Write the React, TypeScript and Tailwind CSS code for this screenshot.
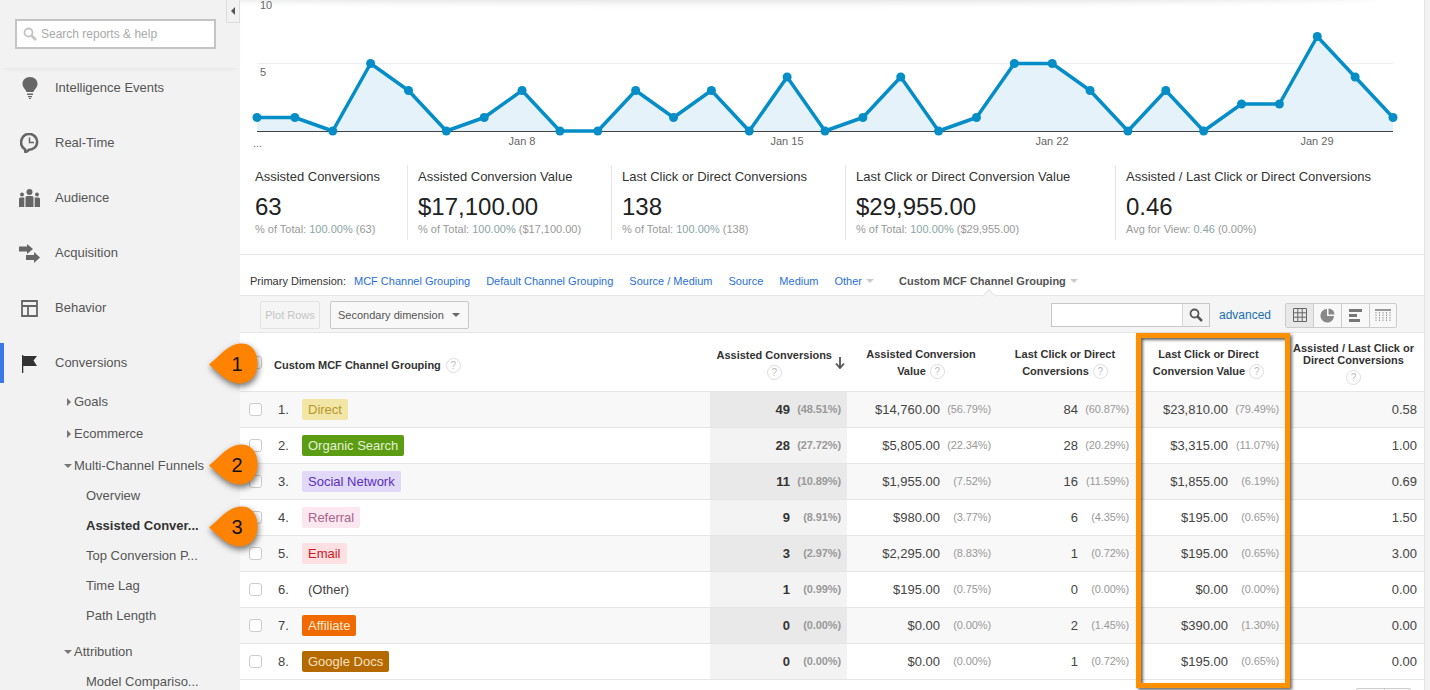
import { ReactNode } from "react";

const values = [1, 1, 0, 5, 3, 0, 1, 3, 0, 0, 3, 1, 3, 0, 4, 0, 1, 4, 0, 1, 5, 5, 3, 0, 3, 0, 2, 2, 7, 4, 1];
// chart svg starts at the sidebar edge, so x is page x minus 240
const pts = values.map((v, i) => ({ x: 17 + (i * 1136) / 30, y: 131 - v * 13.5 }));
const line = pts.map((p) => `${p.x},${p.y}`).join(" ");

const rows = [
  { label: "Direct", chip: "bg-[#f2e6a6] text-[#b8962c]", a: "49", ap: "(48.51%)", b: "$14,760.00", bp: "(56.79%)", c: "84", cp: "(60.87%)", d: "$23,810.00", dp: "(79.49%)", e: "0.58" },
  { label: "Organic Search", chip: "bg-[#5c9c12] text-[#e4f2d4]", a: "28", ap: "(27.72%)", b: "$5,805.00", bp: "(22.34%)", c: "28", cp: "(20.29%)", d: "$3,315.00", dp: "(11.07%)", e: "1.00" },
  { label: "Social Network", chip: "bg-[#e2d9f8] text-[#5a30c0]", a: "11", ap: "(10.89%)", b: "$1,955.00", bp: "(7.52%)", c: "16", cp: "(11.59%)", d: "$1,855.00", dp: "(6.19%)", e: "0.69" },
  { label: "Referral", chip: "bg-[#fce7f0] text-[#a8648a]", a: "9", ap: "(8.91%)", b: "$980.00", bp: "(3.77%)", c: "6", cp: "(4.35%)", d: "$195.00", dp: "(0.65%)", e: "1.50" },
  { label: "Email", chip: "bg-[#fde1e2] text-[#d8141e]", a: "3", ap: "(2.97%)", b: "$2,295.00", bp: "(8.83%)", c: "1", cp: "(0.72%)", d: "$195.00", dp: "(0.65%)", e: "3.00" },
  { label: "(Other)", chip: "text-[#444]", a: "1", ap: "(0.99%)", b: "$195.00", bp: "(0.75%)", c: "0", cp: "(0.00%)", d: "$0.00", dp: "(0.00%)", e: "0.00" },
  { label: "Affiliate", chip: "bg-[#f06a00] text-[#ffe9d6]", a: "0", ap: "(0.00%)", b: "$0.00", bp: "(0.00%)", c: "2", cp: "(1.45%)", d: "$390.00", dp: "(1.30%)", e: "0.00" },
  { label: "Google Docs", chip: "bg-[#b56a00] text-[#f6e0c2]", a: "0", ap: "(0.00%)", b: "$0.00", bp: "(0.00%)", c: "1", cp: "(0.72%)", d: "$195.00", dp: "(0.65%)", e: "0.00" },
];

const stats = [
  { w: "w-[168px] pl-[15px]", label: "Assisted Conversions", value: "63", sub: "% of Total:", pct: "100.00%", rest: "(63)" },
  { w: "w-[204px] pl-[10px]", label: "Assisted Conversion Value", value: "$17,100.00", sub: "% of Total:", pct: "100.00%", rest: "($17,100.00)" },
  { w: "w-[234px] pl-[10px]", label: "Last Click or Direct Conversions", value: "138", sub: "% of Total:", pct: "100.00%", rest: "(138)" },
  { w: "w-[270px] pl-[10px]", label: "Last Click or Direct Conversion Value", value: "$29,955.00", sub: "% of Total:", pct: "100.00%", rest: "($29,955.00)" },
  { w: "flex-1 pl-[10px]", label: "Assisted / Last Click or Direct Conversions", value: "0.46", sub: "Avg for View:", pct: "0.46", rest: "(0.00%)" },
];

function Help() {
  return (
    <span className="inline-flex h-[15px] w-[15px] items-center justify-center rounded-full border border-[#ddd] bg-white text-[10px] font-normal text-[#bbb]">
      ?
    </span>
  );
}

function NavItem({ icon, label }: { icon: ReactNode; label: string }) {
  return (
    <div className="mb-[15px] flex h-[40px] items-center border-l-4 border-transparent text-[13px] text-[#555]">
      <span className="flex w-[51px] justify-center">{icon}</span>
      <span>{label}</span>
    </div>
  );
}

function SubItem({ label, open, className = "" }: { label: string; open?: boolean; className?: string }) {
  return (
    <div className={`flex h-[32px] items-center pl-[64px] text-[13px] text-[#555] ${className}`}>
      <span className="flex w-[10px] justify-center">
        {open ? (
          <span className="mr-[2px] h-0 w-0 border-x-[4px] border-t-[4px] border-x-transparent border-t-[#777]" />
        ) : (
          <span className="h-0 w-0 border-y-[4px] border-l-[4px] border-y-transparent border-l-[#777]" />
        )}
      </span>
      {label}
    </div>
  );
}

function Leaf({ label, bold }: { label: string; bold?: boolean }) {
  return <div className={`flex h-[30px] items-center pl-[86px] text-[13px] ${bold ? "font-bold text-[#333]" : "text-[#555]"}`}>{label}</div>;
}

function Callout({ n, className }: { n: string; className: string }) {
  return (
    <div className={`absolute left-[209px] h-[42px] w-[50px] ${className}`}>
      <svg width="50" height="42" viewBox="0 0 50 42" className="absolute left-0 top-0 overflow-visible drop-shadow-[1px_3px_3px_rgba(0,0,0,0.55)]">
        <path d="M0 21.5C7 16 14 8 20 4.500C25 1 32 -0.500 37 1C44 3 48.500 10 48.500 20.500C48.500 31 43 38 35 40C29 41.500 24 40 18 36.500C12 33 6 26.500 0 21.500Z" fill="#ff8200" />
      </svg>
      <span className="absolute left-[18px] top-[9px] w-[20px] text-center text-[20px] leading-[24px] text-[#111]">{n}</span>
    </div>
  );
}

function Cell({ n, p, bold, className = "" }: { n: string; p: string; bold?: boolean; className?: string }) {
  return (
    <div className={`flex items-center justify-end pr-[6px] ${className}`}>
      <span className={bold ? "font-bold text-[#333]" : "text-[#444]"}>{n}</span>
      <span className={`ml-[7px] w-[44px] whitespace-nowrap text-right text-[11px] tracking-[-0.1px] text-[#999] ${bold ? "font-bold" : ""}`}>{p}</span>
    </div>
  );
}

export default function App() {
  return (
    <div className="relative flex h-[690px] w-[1430px] overflow-hidden bg-white font-['Liberation_Sans',Arial,sans-serif]">
      {/* left nav */}
      <aside className="w-[240px] shrink-0 bg-[#f2f2f2]">
        <div className="relative h-[68px] pl-[15px] pt-[19px] shadow-[0_4px_6px_-4px_rgba(0,0,0,0.08)]">
          <div className="flex h-[30px] w-[201px] items-center border-2 border-[#c4c4c4] bg-white pl-[6px] text-[12px] text-[#aaa]">
            <svg width="14" height="14" viewBox="0 0 14 14" className="mr-[4px]">
              <circle cx="5.500" cy="5.500" r="4" fill="none" stroke="#c4c4c4" strokeWidth="1.800" />
              <path d="M8.500 8.500L13 13" stroke="#c4c4c4" strokeWidth="2.500" />
            </svg>
            Search reports &amp; help
          </div>
          <div className="absolute right-0 top-0 flex h-[23px] w-[14px] items-center justify-center border border-t-0 border-[#ddd] bg-[#f2f2f2]">
            <span className="h-0 w-0 border-y-[4px] border-r-[4px] border-y-transparent border-r-[#555]" />
          </div>
        </div>
        <NavItem
          label="Intelligence Events"
          icon={
            <svg width="16" height="22" viewBox="0 0 16 22">
              <path d="M8 0C3.500 0 .5 3 .5 7C.5 10.500 3.500 12 4.500 15H11.500C12.500 12 15.500 10.500 15.500 7C15.500 3 12.500 0 8 0Z" fill="#666" />
              <path d="M5 16.500H11V18H5ZM6 19H10V20.200H6ZM7 21H9V22H7Z" fill="#666" />
            </svg>
          }
        />
        <NavItem
          label="Real-Time"
          icon={
            <svg width="19" height="20" viewBox="0 0 19 20">
              <path d="M9.500 1A8.300 8.300 0 0 0 5 16.300L5.500 19.500L9 16.800A7.900 7.900 0 1 0 9.500 1Z" fill="none" stroke="#666" strokeWidth="2.600" />
              <path d="M9.500 4.500V9.500H14" fill="none" stroke="#666" strokeWidth="1.500" />
            </svg>
          }
        />
        <NavItem
          label="Audience"
          icon={
            <svg width="21" height="18" viewBox="0 0 21 18">
              <circle cx="10.500" cy="3" r="3" fill="#666" />
              <circle cx="3" cy="5.500" r="2" fill="#666" />
              <circle cx="18" cy="5.500" r="2" fill="#666" />
              <path d="M6.500 8.500Q6.500 7 8 7H13Q14.500 7 14.500 8.500V18H6.500ZM0 10Q0 8.500 1.500 8.500H5.300V18H0ZM15.700 8.500H19.500Q21 8.500 21 10V18H15.700Z" fill="#666" />
            </svg>
          }
        />
        <NavItem
          label="Acquisition"
          icon={
            <svg width="21" height="19" viewBox="0 0 21 19">
              <path d="M0 2.500H8V0L14 5L8 10V7.500H0ZM7 11H15V8L21 13.500L15 19V16H7Z" fill="#666" />
            </svg>
          }
        />
        <NavItem
          label="Behavior"
          icon={
            <svg width="17" height="17" viewBox="0 0 17 17">
              <path d="M1 1H16V16H1ZM1 6H16M7 6V16" fill="none" stroke="#666" strokeWidth="1.800" />
            </svg>
          }
        />
        <div className="flex h-[40px] items-center border-l-4 border-[#3b78e7] text-[13px] text-[#555]">
          <span className="flex w-[51px] justify-center">
            <svg width="15" height="19" viewBox="0 0 15 19">
              <path d="M0 1H1.300V19H0ZM1.300 2H15L11.500 6.500L15 12H1.300Z" fill="#333" />
            </svg>
          </span>
          Conversions
        </div>
        <div className="pt-[3px]">
          <SubItem label="Goals" />
          <SubItem label="Ecommerce" />
          <SubItem label="Multi-Channel Funnels" open className="-mb-[1px]" />
          <Leaf label="Overview" />
          <Leaf label="Assisted Conver..." bold />
          <Leaf label="Top Conversion P..." />
          <Leaf label="Time Lag" />
          <Leaf label="Path Length" />
          <SubItem label="Attribution" open className="-mb-[1px] mt-[5px]" />
          <Leaf label="Model Compariso..." />
        </div>
      </aside>

      {/* report */}
      <main className="w-[1184px] shrink-0">
        <div className="h-[165px]">
          <svg width="1184" height="165" viewBox="0 0 1184 165" className="block">
            <defs>
              <filter id="topblur" x="-10%" y="-200%" width="120%" height="500%">
                <feGaussianBlur stdDeviation="5 3" />
              </filter>
            </defs>
            <ellipse cx="500" cy="-3" rx="640" ry="6" fill="#000" opacity="0.1" filter="url(#topblur)" />
            <line x1="17" y1="63.500" x2="1153" y2="63.500" stroke="#eeeeee" />
            <polygon points={`17,131 ${line} 1153,131`} fill="#e5f2f9" />
            <line x1="17" y1="131.500" x2="1153" y2="131.500" stroke="#444" />
            <polyline points={line} fill="none" stroke="#058dc7" strokeWidth="3.500" strokeLinejoin="round" />
            {pts.map((p) => (
              <circle key={p.x} cx={p.x} cy={p.y} r="4.500" fill="#058dc7" />
            ))}
            <g fontSize="11" fill="#666">
              <text x="20" y="9">10</text>
              <text x="20" y="76">5</text>
              <text x="13" y="147">...</text>
              <text x="282" y="145" textAnchor="middle">Jan 8</text>
              <text x="547" y="145" textAnchor="middle">Jan 15</text>
              <text x="812" y="145" textAnchor="middle">Jan 22</text>
              <text x="1077" y="145" textAnchor="middle">Jan 29</text>
            </g>
          </svg>
        </div>

        <div className="flex h-[75px] text-[#333]">
          {stats.map((s, i) => (
            <div key={s.label} className={`${s.w} ${i < 4 ? "border-r border-[#e5e5e5]" : ""} whitespace-nowrap pt-[4px]`}>
              <div className="text-[13px] leading-[15px]">{s.label}</div>
              <div className="mt-[9px] text-[24px] leading-[28px] text-[#222]">{s.value}</div>
              <div className="mt-[2px] text-[11px] leading-[13px] text-[#999]">
                {s.sub} <span className="text-[#8aa5a5]">{s.pct}</span> {s.rest}
              </div>
            </div>
          ))}
        </div>

        <div className="relative mt-[14px] flex h-[42px] items-center border-y border-[#e5e5e5] pl-[10px] pt-[12px] text-[11px]">
          <span className="text-[#333]">Primary Dimension:</span>
          <a className="ml-[8px] text-[#2a6fdb]">MCF Channel Grouping</a>
          <a className="ml-[16px] text-[#2a6fdb]">Default Channel Grouping</a>
          <a className="ml-[16px] text-[#2a6fdb]">Source / Medium</a>
          <a className="ml-[16px] text-[#2a6fdb]">Source</a>
          <a className="ml-[16px] text-[#2a6fdb]">Medium</a>
          <a className="ml-[16px] text-[#2a6fdb]">Other</a>
          <span className="ml-[4px] h-0 w-0 border-x-[4px] border-t-[4px] border-x-transparent border-t-[#ccc]" />
          <span className="ml-[25px] font-bold text-[#555]">Custom MCF Channel Grouping</span>
          <span className="ml-[4px] h-0 w-0 border-x-[4px] border-t-[4px] border-x-transparent border-t-[#ccc]" />
          <span className="absolute left-[744px] top-[36px] h-[10px] w-[10px] rotate-45 border-l border-t border-[#e5e5e5] bg-[#f5f5f5]" />
        </div>

        <div className="flex h-[37px] items-center border-b border-[#e5e5e5] bg-[#f5f5f5] pl-[20px] pt-[2px]">
          <div className="flex h-[28px] w-[60px] items-center justify-center rounded-[2px] border border-[#e2e2e2] text-[11px] text-[#c4c4c4]">Plot Rows</div>
          <div className="ml-[10px] flex h-[28px] w-[139px] items-center justify-between rounded-[2px] border border-[#c8c8c8] bg-[#f8f8f8] px-[7px] text-[11px] text-[#555]">
            Secondary dimension
            <span className="mr-[1px] h-0 w-0 border-x-[4px] border-t-[4px] border-x-transparent border-t-[#666]" />
          </div>
          <div className="ml-[582px] flex h-[24px] w-[159px] border border-[#c8c8c8] bg-white">
            <div className="flex-1" />
            <div className="flex w-[27px] items-center justify-center border-l border-[#d8d8d8] bg-[#f4f4f4]">
              <svg width="14" height="14" viewBox="0 0 14 14">
                <circle cx="5.500" cy="5.500" r="4" fill="none" stroke="#555" strokeWidth="1.800" />
                <path d="M8.500 8.500L13 13" stroke="#555" strokeWidth="2.500" />
              </svg>
            </div>
          </div>
          <a className="ml-[9px] text-[12px] text-[#1a6fb5]">advanced</a>
          <div className="ml-[14px] flex h-[25px] w-[112px] rounded-[2px] border border-[#ccc] bg-[#f8f8f8]">
            <div className="flex w-[28px] items-center justify-center border-r border-[#ccc] bg-[#e8e8e8]">
              <svg width="14" height="14" viewBox="0 0 14 14">
                <path d="M.5 .5H13.500V13.500H.5ZM.5 4.800H13.500M.5 9.200H13.500M4.800 .5V13.500M9.200 .5V13.500" fill="none" stroke="#666" />
              </svg>
            </div>
            <div className="flex w-[28px] items-center justify-center border-r border-[#ccc]">
              <svg width="15" height="15" viewBox="0 0 15 15">
                <path d="M7 1A6.800 6.800 0 1 0 14 8H7Z" fill="#888" />
                <path d="M8.500 .5A6 6 0 0 1 14.500 6.500H8.500Z" fill="#888" />
              </svg>
            </div>
            <div className="flex w-[28px] items-center justify-center border-r border-[#ccc]">
              <svg width="14" height="13" viewBox="0 0 14 13">
                <path d="M0 0H13V3H0ZM0 5H8V8H0ZM0 10H11V13H0Z" fill="#777" />
              </svg>
            </div>
            <div className="flex flex-1 items-center justify-center">
              <svg width="16" height="12" viewBox="0 0 16 12">
                <path d="M0 0H16V2H0Z" fill="#999" />
                <path d="M1 3V12M4.500 3V12M8 3V12M11.500 3V12M15 3V12" stroke="#999" strokeDasharray="1.500 1" />
              </svg>
            </div>
          </div>
        </div>

        {/* table head */}
        <div className="grid h-[59px] grid-cols-[470px_137px_150px_138px_150px_139px] border-b border-[#e5e5e5] text-[11px] font-bold leading-[17px] text-[#333]">
          <div className="flex items-center pl-[9px] pt-[6px]">
            <span className="-mt-[6px] mr-[12px] h-[13px] w-[13px] rounded-[3px] border border-[#ccc] bg-white" />
            Custom MCF Channel Grouping
            <span className="ml-[5px]"><Help /></span>
          </div>
          <div className="flex items-center justify-end pr-[2px] pt-[2px]">
            <div className="text-center">
              Assisted Conversions
              <div className="flex justify-center pt-[1px]"><Help /></div>
            </div>
            <svg width="10" height="12" viewBox="0 0 10 12" className="ml-[3px]">
              <path d="M5 0V11M1 6.500L5 11L9 6.500" fill="none" stroke="#555" strokeWidth="1.800" />
            </svg>
          </div>
          <div className="flex flex-col items-center justify-center pr-[2px] pt-[2px]">
            Assisted Conversion
            <div className="flex items-center gap-[4px]">Value <Help /></div>
          </div>
          <div className="flex flex-col items-center justify-center pr-[2px] pt-[2px]">
            Last Click or Direct
            <div className="flex items-center gap-[4px]">Conversions <Help /></div>
          </div>
          <div className="flex flex-col items-center justify-center pr-[3px] pt-[2px]">
            Last Click or Direct
            <div className="flex items-center gap-[4px]">Conversion Value <Help /></div>
          </div>
          <div className="flex flex-col items-center justify-start whitespace-nowrap pr-[2px] pt-[9px] text-center leading-[12px]">
            Assisted / Last Click or
            <span>Direct Conversions</span>
            <span className="mt-[4px]"><Help /></span>
          </div>
        </div>

        {/* table rows */}
        {rows.map((r, i) => {
          const odd = i % 2 === 0;
          return (
            <div key={r.label} className={`grid h-[36px] grid-cols-[470px_137px_150px_138px_150px_139px] border-b border-[#e5e5e5] text-[13px] text-[#444] ${odd ? "bg-[#f8f8f8]" : "bg-white"}`}>
              <div className="flex items-center pl-[9px]">
                <span className="h-[13px] w-[13px] rounded-[3px] border border-[#ccc] bg-white" />
                <span className="ml-[16px] w-[24px] text-[#444]">{i + 1}.</span>
                <span className={`flex h-[21px] items-center rounded-[2px] px-[6px] ${r.chip}`}>{r.label}</span>
              </div>
              <Cell n={r.a} p={r.ap} bold className={odd ? "bg-[#e9e9e9]" : "bg-[#f3f3f3]"} />
              <Cell n={r.b} p={r.bp} />
              <Cell n={r.c} p={r.cp} />
              <Cell n={r.d} p={r.dp} />
              <div className="flex items-center justify-end pr-[7px]">{r.e}</div>
            </div>
          );
        })}

        {/* pager, only its top edge is on screen */}
        <div className="ml-[1116px] mt-[8px] flex h-[20px] w-[55px] rounded-[2px] border border-[#ccc]">
          <div className="w-[28px] border-r border-[#ccc]" />
        </div>
      </main>

      <div className="flex-1 border-l border-[#e5e5e5] bg-[#f2f2f2]" />

      {/* annotations sit on top of the report */}
      <Callout n="1" className="top-[343px]" />
      <Callout n="2" className="top-[444px]" />
      <Callout n="3" className="top-[506px]" />
      <div className="pointer-events-none absolute left-[1136px] top-[333px] h-[355px] w-[154px] border-[5px] border-[#ff9000] shadow-[2px_2px_3px_rgba(0,0,0,0.6),inset_2px_2px_3px_rgba(0,0,0,0.6)]" />
    </div>
  );
}
